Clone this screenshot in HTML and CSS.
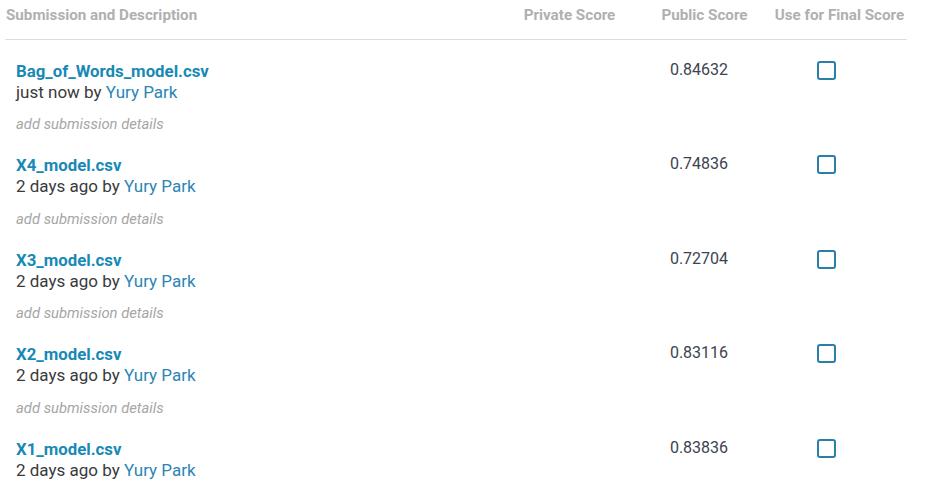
FILE: index.html
```html
<!DOCTYPE html>
<html>
<head>
<meta charset="utf-8">
<link rel="stylesheet" href="styles.css">
</head>
<body>
<div class="table">
  <div class="head">
    <div class="hcell hdesc">Submission and Description</div>
    <div class="hcell">Private Score</div>
    <div class="hcell">Public Score</div>
    <div class="hcell">Use for Final Score</div>
  </div>

  <div class="row">
    <div class="desc">
      <a class="file">Bag_of_Words_model.csv</a>
      <div class="meta">just now by <a class="user">Yury Park</a></div>
      <div class="details">add submission details</div>
    </div>
    <div class="cell"></div>
    <div class="cell score">0.84632</div>
    <div class="cell final"><span class="check"></span></div>
  </div>

  <div class="row">
    <div class="desc">
      <a class="file">X4_model.csv</a>
      <div class="meta">2 days ago by <a class="user">Yury Park</a></div>
      <div class="details">add submission details</div>
    </div>
    <div class="cell"></div>
    <div class="cell score">0.74836</div>
    <div class="cell final"><span class="check"></span></div>
  </div>

  <div class="row">
    <div class="desc">
      <a class="file">X3_model.csv</a>
      <div class="meta">2 days ago by <a class="user">Yury Park</a></div>
      <div class="details">add submission details</div>
    </div>
    <div class="cell"></div>
    <div class="cell score">0.72704</div>
    <div class="cell final"><span class="check"></span></div>
  </div>

  <div class="row">
    <div class="desc">
      <a class="file">X2_model.csv</a>
      <div class="meta">2 days ago by <a class="user">Yury Park</a></div>
      <div class="details">add submission details</div>
    </div>
    <div class="cell"></div>
    <div class="cell score">0.83116</div>
    <div class="cell final"><span class="check"></span></div>
  </div>

  <div class="row">
    <div class="desc">
      <a class="file">X1_model.csv</a>
      <div class="meta">2 days ago by <a class="user">Yury Park</a></div>
      <div class="details">add submission details</div>
    </div>
    <div class="cell"></div>
    <div class="cell score">0.83836</div>
    <div class="cell final"><span class="check"></span></div>
  </div>
</div>
</body>
</html>
```

FILE: styles.css
```css
html, body {
  margin: 0;
  padding: 0;
  background: #fff;
}
body {
  font-family: Roboto, "Liberation Sans", sans-serif;
  overflow: hidden;
}
.table {
  margin-left: 5px;
  width: 902px;
}
.head {
  display: grid;
  grid-template-columns: 1fr 135px 135px 135px;
  height: 34px;
  border-bottom: 1px solid #dcdcdc;
  padding-left: 1px;
  padding-top: 5px;
  box-sizing: content-box;
}
.hcell {
  font-size: 15.2px;
  font-weight: 700;
  color: #b0b0b0;
  text-align: center;
  line-height: 20px;
}
.hdesc {
  text-align: left;
}
.row {
  display: grid;
  grid-template-columns: 1fr 135px 135px 135px;
  padding: 10.5px 0 10.5px 1px;
}
.head + .row {
  padding-top: 20.5px;
}
.desc {
  padding-left: 10px;
}
.file {
  display: block;
  font-size: 16.8px;
  font-weight: 700;
  color: #1789b5;
  line-height: 21px;
}
.meta {
  font-size: 17px;
  color: #3a3a3a;
  line-height: 21px;
}
.user {
  color: #2a86b4;
}
.details {
  font-size: 14.8px;
  font-style: italic;
  color: #a6a6a6;
  line-height: 20px;
  margin-top: 11.5px;
}
.cell {
  text-align: center;
}
.score {
  font-size: 16px;
  color: #3b4350;
  line-height: 18px;
  padding-right: 11px;
}
.final {
  padding-right: 26px;
}
.check {
  display: inline-block;
  box-sizing: border-box;
  width: 19px;
  height: 19px;
  border: 2px solid #2a7fa8;
  border-radius: 3px;
}
```
